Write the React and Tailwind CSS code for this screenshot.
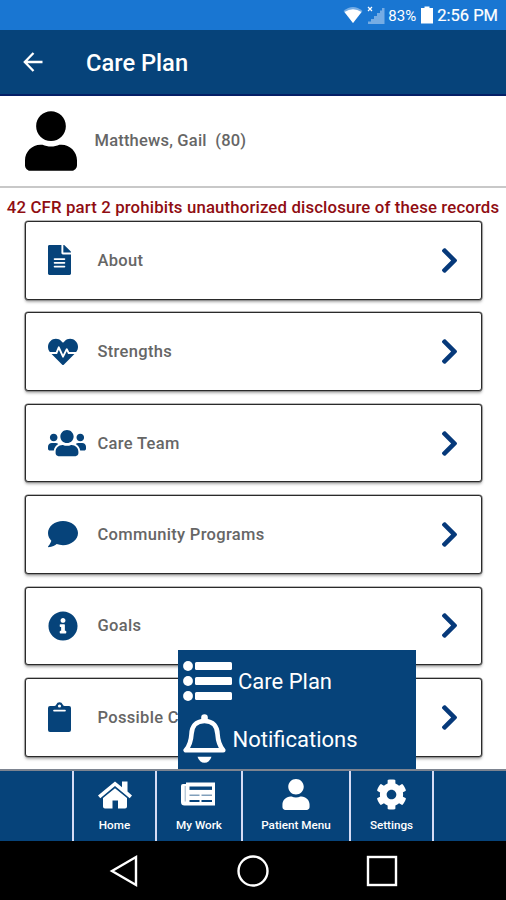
import {
  FaChevronRight,
  FaCog,
  FaComment,
  FaFileAlt,
  FaHeartbeat,
  FaInfoCircle,
  FaUser,
  FaUsers,
} from "react-icons/fa";

const sections = [
  { label: "About", icon: FaFileAlt, size: "w-[23px] h-[30px]" },
  { label: "Strengths", icon: FaHeartbeat, size: "w-[30px] h-[30px]" },
  { label: "Care Team", icon: FaUsers, size: "w-[38px] h-[30px]" },
  { label: "Community Programs", icon: FaComment, size: "w-[30px] h-[30px]" },
  { label: "Goals", icon: FaInfoCircle, size: "w-[30px] h-[30px]" },
  { label: "Possible Concerns", icon: ClipboardIcon, size: "w-[23px] h-[30px]" },
];

function StatusBar() {
  return (
    <div className="h-[30px] bg-[#1976d2] flex items-center justify-end pr-2 text-white shrink-0">
      <svg width="20" height="18" viewBox="0 0 20 18" className="mr-[4px]">
        <path d="M0.5 5 Q10 -3 19.5 5 L10 17 Z" fill="#fff" opacity="0.4" />
        <path d="M1.5 6 Q10 0.5 18.5 6 L10 17 Z" fill="#fff" />
      </svg>
      <svg width="18" height="19" viewBox="0 0 18 19" className="mr-[3px]">
        <path
          d="M1 18 V15.5 H4 V13 H7 V10 H10 V7 H13 V4.5 H15 V2 H17.5 V18 Z"
          fill="#fff"
          opacity="0.4"
        />
        <path d="M1 1 L5 5 M5 1 L1 5" stroke="#fff" strokeWidth="1.2" />
      </svg>
      <span className="text-[15px] leading-[28px] pt-[2px] w-[30px] mr-[3px] whitespace-nowrap">
        83%
      </span>
      <svg width="12" height="18" viewBox="0 0 12 18" className="mr-[4px]">
        <path d="M3.5 0.5 H8.5 V2 H12 V17.5 H0 V2 H3.5 Z" fill="#fff" />
      </svg>
      <span className="text-[16.5px] leading-[28px] pt-[2px] whitespace-nowrap [-webkit-text-stroke:0.2px_#fff]">
        2:56 PM
      </span>
    </div>
  );
}

function ClipboardIcon({ className }) {
  return (
    <svg className={className} viewBox="0 0 23 30">
      <path
        d="M2 4 H6.5 Q8 4 8.3 2.6 Q9.2 0.2 11.5 0.2 Q13.8 0.2 14.7 2.6 Q15 4 16.5 4 H21 Q23 4 23 6 V28 Q23 30 21 30 H2 Q0 30 0 28 V6 Q0 4 2 4 Z"
        fill="#06437a"
      />
      <circle cx="11.5" cy="4" r="1.6" fill="#fff" />
      <path d="M6 8.6 H17" stroke="#fff" strokeWidth="1.7" strokeLinecap="round" />
    </svg>
  );
}

function HomeIcon() {
  return (
    <svg width="34" height="28" viewBox="0 0 34 28" fill="#fff">
      <path d="M17 0.5 L24 6.2 V0.5 H29.5 V10.6 L34 14.4 L31.7 17.3 L17 5 L2.3 17.3 L0 14.4 Z" />
      <path d="M17 7.2 L29 17 V25.5 Q29 27.5 27 27.5 H20 V19.5 H14.5 V27.5 H7 Q5 27.5 5 25.5 V17 Z" />
    </svg>
  );
}

function NewsIcon() {
  return (
    <svg width="34" height="24" viewBox="0 0 34 24" className="-ml-[2px] -mt-[1px]">
      <path d="M5 0.5 H34 V23.5 H3.5 Q0 23.5 0 20 V4 Q0 2 2 2 H5 Z" fill="#fff" />
      <path d="M4.2 4 V19.5" stroke="#06437a" strokeWidth="1" opacity="0.4" />
      <path d="M8.5 6.2 H31" stroke="#06437a" strokeWidth="3.4" />
      <path d="M8.5 13.2 H18.5 M20.5 13.2 H31" stroke="#06437a" strokeWidth="1.6" opacity="0.5" />
      <path d="M8.5 19 H18.5 M20.5 19 H31" stroke="#06437a" strokeWidth="2.2" />
    </svg>
  );
}

function ListIcon() {
  return (
    <svg width="49" height="40" viewBox="0 0 49 40" fill="#fff">
      {[5, 20, 35].map((y) => (
        <g key={y}>
          <circle cx="5" cy={y} r="4.9" />
          <rect x="12" y={y - 4} width="37" height="8" rx="1.5" />
        </g>
      ))}
    </svg>
  );
}

function BellIcon() {
  return (
    <svg width="43" height="49" viewBox="0 0 43 49" fill="none">
      <path
        d="M21.5 7 C12.5 7 8.8 13 8.5 20 C8 28.5 6 32.5 2.7 36.3 H40.3 C37 32.5 35 28.5 34.5 20 C34.2 13 30.5 7 21.5 7 Z"
        stroke="#fff"
        strokeWidth="4.6"
        strokeLinejoin="round"
      />
      <path d="M18.2 7 V3.4 Q18.2 0.3 21.5 0.3 Q24.8 0.3 24.8 3.4 V7 Z" fill="#fff" />
      <path d="M14.5 42.7 H28.5 Q26.5 48.7 21.5 48.7 Q16.5 48.7 14.5 42.7 Z" fill="#fff" />
    </svg>
  );
}

function SectionCard({ label, icon: Icon, size }) {
  return (
    <div className="h-[78.6px] flex items-center border border-[#2a2a2a] rounded-[3px] bg-white pl-[22px] pr-[18px] shadow-[0_0_0_0.6px_#777,0_2px_3px_rgba(0,0,0,0.35)]">
      <div className="w-[49.5px] shrink-0 text-[#06437a]">
        <Icon className={size} preserveAspectRatio="none" />
      </div>
      <span className="flex-1 pt-[2px] text-[16.5px] font-medium text-[#666] tracking-[0.32px]">
        {label}
      </span>
      <FaChevronRight className="w-[29px] h-[29px] -mr-[1px] text-[#06397a]" />
    </div>
  );
}

function Tab({ label, width, children }) {
  return (
    <div
      className={`${width} h-full flex flex-col items-center border-r-2 border-[#d5dcf5] text-white`}
    >
      <div className="h-[47px] w-full flex items-center justify-center">{children}</div>
      <span className="-mt-[1px] text-[11.7px] leading-[16px] font-medium whitespace-nowrap">
        {label}
      </span>
    </div>
  );
}

export default function App() {
  return (
    <div className="relative w-[506px] h-[900px] overflow-hidden flex flex-col bg-white font-[Roboto,sans-serif]">
      <StatusBar />

      <header className="h-[66px] shrink-0 bg-[#06437a] border-b-2 border-[#041f66] flex items-center text-white">
        <svg width="20" height="20" viewBox="0 0 20 20" className="ml-[23px] mr-[43px]">
          <path
            d="M19.5 10 H2 M10.5 1 L1.8 10 L10.5 19"
            fill="none"
            stroke="#fff"
            strokeWidth="2.3"
          />
        </svg>
        <h1 className="text-[23.7px] font-medium pt-[4px]">Care Plan</h1>
      </header>

      {/* Patient */}
      <div className="h-[92px] shrink-0 flex items-center border-b-2 border-[#c8c8c8] pl-[25px]">
        <FaUser className="w-[52px] h-[60px] text-black" />
        <span className="ml-[17.5px] pt-[1px] text-[16.5px] font-medium text-[#666] whitespace-pre tracking-[0.2px]">
          {"Matthews, Gail  (80)"}
        </span>
      </div>

      <p className="mt-[7px] h-[25px] shrink-0 text-center text-[16.8px] leading-[24px] font-medium tracking-[0.14px] text-[#900d12] whitespace-nowrap">
        42 CFR part 2 prohibits unauthorized disclosure of these records
      </p>

      <main className="flex-1 min-h-0 pl-[25px] pr-[24px] pt-px flex flex-col gap-[12.8px]">
        {sections.map((s) => (
          <SectionCard key={s.label} label={s.label} icon={s.icon} size={s.size} />
        ))}
      </main>

      {/* Patient menu popup */}
      <div className="absolute left-[178px] top-[650px] w-[238px] h-[119px] bg-[#06437a] text-white text-[22px] pl-[5px] pt-[11px]">
        <div className="flex items-center h-[40px] gap-[6px]">
          <ListIcon />
          <span>Care Plan</span>
        </div>
        <div className="flex items-center h-[49px] mt-[13px] gap-[6.5px]">
          <BellIcon />
          <span className="pt-px">Notifications</span>
        </div>
      </div>

      <nav className="h-[72px] shrink-0 border-t-2 border-[#7d8490] bg-[#06437a] flex">
        <div className="w-[74px] border-r-2 border-[#d5dcf5]" />
        <Tab label="Home" width="w-[83px]">
          <HomeIcon />
        </Tab>
        <Tab label="My Work" width="w-[86px]">
          <NewsIcon />
        </Tab>
        <Tab label="Patient Menu" width="w-[108px]">
          <FaUser className="w-[28px] h-[31px]" />
        </Tab>
        <Tab label="Settings" width="w-[83px]">
          <FaCog className="w-[31px] h-[31px]" />
        </Tab>
      </nav>

      {/* Android navigation */}
      <div className="h-[59px] shrink-0 bg-black flex items-center pl-[108px]">
        <svg width="30" height="34" viewBox="0 0 30 34" className="mr-[98px]">
          <path d="M28 3 V31 L4 17 Z" fill="none" stroke="#fff" strokeWidth="2.4" />
        </svg>
        <svg width="34" height="34" viewBox="0 0 34 34" className="mr-[95px]">
          <circle cx="17" cy="17" r="14.5" fill="none" stroke="#fff" strokeWidth="2.4" />
        </svg>
        <svg width="34" height="34" viewBox="0 0 34 34">
          <rect x="3" y="3" width="28" height="28" fill="none" stroke="#fff" strokeWidth="2.4" />
        </svg>
      </div>
    </div>
  );
}
